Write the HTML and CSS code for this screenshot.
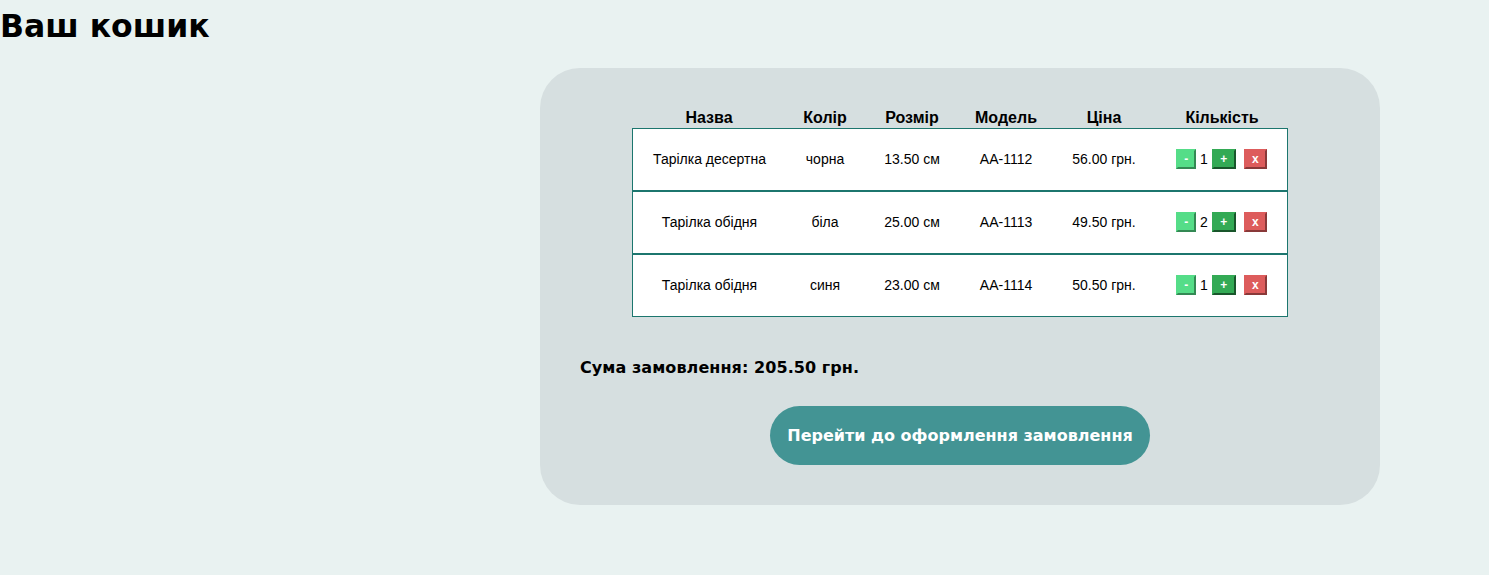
FILE: index.html
```html
<!DOCTYPE html>
<html lang="uk">
<head>
<meta charset="utf-8">
<title>Ваш кошик</title>
<link rel="stylesheet" href="styles.css">
</head>
<body>
<h1 class="title">Ваш кошик</h1>
<section class="cart">
  <table class="items">
    <thead>
      <tr>
        <th class="c-name">Назва</th>
        <th class="c-color">Колір</th>
        <th class="c-size">Розмір</th>
        <th class="c-model">Модель</th>
        <th class="c-price">Ціна</th>
        <th class="c-qty">Кількість</th>
      </tr>
    </thead>
    <tbody>
      <tr>
        <td>Тарілка десертна</td>
        <td>чорна</td>
        <td>13.50 см</td>
        <td>АА-1112</td>
        <td>56.00 грн.</td>
        <td><button class="btn dec">-</button> <span class="qty">1</span> <button class="btn inc">+</button><button class="btn del">x</button></td>
      </tr>
      <tr>
        <td>Тарілка обідня</td>
        <td>біла</td>
        <td>25.00 см</td>
        <td>АА-1113</td>
        <td>49.50 грн.</td>
        <td><button class="btn dec">-</button> <span class="qty">2</span> <button class="btn inc">+</button><button class="btn del">x</button></td>
      </tr>
      <tr>
        <td>Тарілка обідня</td>
        <td>синя</td>
        <td>23.00 см</td>
        <td>АА-1114</td>
        <td>50.50 грн.</td>
        <td><button class="btn dec">-</button> <span class="qty">1</span> <button class="btn inc">+</button><button class="btn del">x</button></td>
      </tr>
    </tbody>
  </table>
  <p class="total">Сума замовлення: 205.50 грн.</p>
  <div class="actions">
    <button class="checkout">Перейти до оформлення замовлення</button>
  </div>
</section>
</body>
</html>
```

FILE: styles.css
```css
html, body {
  margin: 0;
  padding: 0;
}
body {
  background: #e9f2f1;
  font-family: "DejaVu Sans", Verdana, sans-serif;
  color: #000;
}
.title {
  margin: 8px 0 0;
  font-size: 31.5px;
  line-height: 37px;
  font-weight: bold;
}
.cart {
  box-sizing: border-box;
  width: 840px;
  margin: 23px 0 0 540px;
  padding: 40px 40px 40px;
  background: #d6dfe0;
  border-radius: 40px;
}
.items {
  margin: 0 auto;
  border-collapse: separate;
  border-spacing: 0;
  font-family: "Liberation Sans", Arial, sans-serif;
}
.items th {
  font-size: 16px;
  font-weight: bold;
  line-height: 20px;
  padding: 0;
  text-align: center;
}
.c-name { width: 154px; }
.c-color { width: 78px; }
.c-size { width: 96px; }
.c-model { width: 92px; }
.c-price { width: 104px; }
.c-qty { width: 132px; }
.items td {
  background: #fff;
  font-size: 14px;
  line-height: 16px;
  height: 61px;
  padding: 0 0 1px;
  box-sizing: content-box;
  text-align: center;
  vertical-align: middle;
  border-top: 1px solid #1c766e;
  border-bottom: 1px solid #1c766e;
}
.items td {
  height: 60px;
}
.items td:first-child {
  border-left: 1px solid #1c766e;
}
.items td:last-child {
  border-right: 1px solid #1c766e;
}
.btn {
  font-family: "Liberation Sans", Arial, sans-serif;
  font-size: 12px;
  font-weight: bold;
  line-height: 14px;
  color: #fff;
  padding: 1px 6px;
  margin: 0;
  vertical-align: middle;
  cursor: pointer;
}
.dec {
  width: 20px;
  padding: 1px 0;
  background: #55dd88;
  border: 2px outset #55dd88;
}
.inc {
  width: 24px;
  padding: 1px 0;
  background: #33aa55;
  border: 2px outset #33aa55;
}
.del {
  width: 23px;
  padding: 1px 0;
  margin-left: 8px;
  background: #dd5c5c;
  border: 2px outset #dd5c5c;
}
.qty {
  vertical-align: middle;
}
.total {
  margin: 41px 0 0;
  font-size: 16px;
  line-height: 19px;
  font-weight: bold;
  letter-spacing: 0.07px;
}
.actions {
  display: flex;
  justify-content: center;
  margin-top: 29px;
}
.checkout {
  font-family: "DejaVu Sans", Verdana, sans-serif;
  font-size: 16px;
  line-height: 19px;
  font-weight: bold;
  color: #fff;
  background: #439494;
  border: none;
  border-radius: 30px;
  padding: 20px 17px;
  cursor: pointer;
}
```
